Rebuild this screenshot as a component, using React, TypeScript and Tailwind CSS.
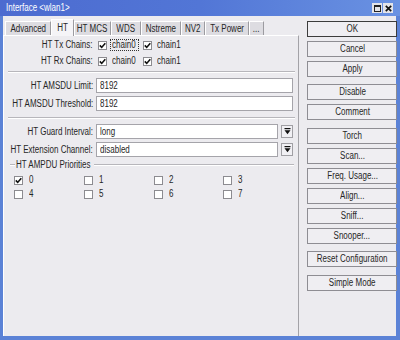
import React from "react";

const F = "font-['Liberation_Sans',Arial,sans-serif]";

function T({ children, o = "l" }: { children: React.ReactNode; o?: "l" | "r" | "c" }) {
  const origin = o === "l" ? "origin-left" : o === "r" ? "origin-right" : "origin-center";
  return <span className={`inline-block whitespace-nowrap leading-none scale-x-[0.8] shrink-0 ${origin}`}>{children}</span>;
}

function Check({ checked }: { checked?: boolean }) {
  return (
    <span className="w-[9px] h-[9px] border border-[#8c8b90] bg-white flex items-center justify-center shrink-0">
      {checked && (
        <svg width="7" height="7" viewBox="0 0 7 7">
          <path d="M0.8 3.4 L2.7 5.4 L6.3 1.2" stroke="#111" strokeWidth="1.6" fill="none" />
        </svg>
      )}
    </span>
  );
}

function Btn({ label, def, cls = "" }: { label: string; def?: boolean; cls?: string }) {
  return (
    <div
      className={`h-[16px] flex items-center justify-center bg-[#efeef2] border ${
        def ? "border-[#3c3c3c]" : "border-[#8e8d93]"
      } ${cls}`}
    >
      <T o="c">{label}</T>
    </div>
  );
}

function Label({ text }: { text: string }) {
  return (
    <div className="w-[85px] flex justify-end shrink-0">
      <T o="r">{text}</T>
    </div>
  );
}

function Sep({ cls = "" }: { cls?: string }) {
  return <div className={`h-[2px] border-t border-[#b7b6bb] border-b border-b-white -mr-[2px] ${cls}`} />;
}

function DropBtn() {
  return (
    <div className="w-[12px] h-[13px] ml-[3px] bg-[#f1f0f4] border border-[#a09fa4] flex items-center justify-center shrink-0">
      <svg width="7" height="7" viewBox="0 0 7 7">
        <rect x="0.5" y="0" width="6" height="1.2" fill="#111" />
        <path d="M0.5 2.2 L6.5 2.2 L3.5 6.2 Z" fill="#111" />
      </svg>
    </div>
  );
}

function ChainRow({ label, focus }: { label: string; focus?: boolean }) {
  return (
    <div className="h-[16px] flex items-center">
      <Label text={label} />
      <span className="ml-[5px]">
        <Check checked />
      </span>
      <span
        className={`ml-[3px] w-[29px] h-[12px] pl-[1px] border border-dotted flex items-center overflow-visible shrink-0 ${
          focus ? "border-[#333]" : "border-transparent"
        }`}
      >
        <T>chain0</T>
      </span>
      <span className="ml-[4px]">
        <Check checked />
      </span>
      <span className="ml-[5px] flex items-center">
        <T>chain1</T>
      </span>
    </div>
  );
}

const tabs: { t: string; w: string; active?: boolean }[] = [
  { t: "Advanced", w: "w-[46px]" },
  { t: "HT", w: "w-[23px]", active: true },
  { t: "HT MCS", w: "w-[37px]" },
  { t: "WDS", w: "w-[30px]" },
  { t: "Nstreme", w: "w-[40px]" },
  { t: "NV2", w: "w-[24px]" },
  { t: "Tx Power", w: "w-[44px]" },
  { t: "...", w: "w-[15px]" },
];

function Input({ v }: { v: string }) {
  return (
    <div className="ml-[3px] flex-1 min-w-0 h-full bg-white border border-[#a5a4aa] flex items-center pl-[3px]">
      <T>{v}</T>
    </div>
  );
}

export default function App() {
  return (
    <div className={`w-[400px] h-[340px] flex flex-col bg-[#5b82d6] text-[10px] text-[#262626] ${F}`}>
      {/* title bar */}
      <div className="h-[16px] flex items-center bg-gradient-to-r from-[#4c6bd0] via-[#5276d6] to-[#6a92e2] shrink-0">
        <div className="ml-[6px] text-white flex items-center">
          <T>{"Interface <wlan1>"}</T>
        </div>
        <div className="ml-auto mr-[7px] flex items-center gap-[1px]">
          <div className="w-[10px] h-[10px] bg-[#e4e4e8] flex items-center justify-center">
            <div className="w-[7px] h-[7px] border border-[#222] border-t-2" />
          </div>
          <div className="w-[10px] h-[10px] bg-[#e4e4e8] flex items-center justify-center">
            <svg width="7" height="7" viewBox="0 0 7 7">
              <path d="M0.8 0.8 L6.2 6.2 M6.2 0.8 L0.8 6.2" stroke="#111" strokeWidth="1.7" />
            </svg>
          </div>
        </div>
      </div>
      {/* body */}
      <div className="flex-1 flex ml-[3px] mr-[4px] mb-[4px] bg-[#ecebef]">
        {/* left panel */}
        <div className="w-[297px] flex flex-col">
          <div className="h-[19px] flex items-end pl-[2px]">
            {tabs.map((tb) => (
              <div
                key={tb.t}
                className={`${tb.w} flex items-center justify-center border-t border-l border-t-white border-l-white border-r border-r-[#9c9ba0] ${
                  tb.active ? "h-[17px] bg-[#f5f4f7] -mb-[1px] relative z-10" : "h-[14px] bg-[#dddce1]"
                }`}
              >
                <T o="c">{tb.t}</T>
              </div>
            ))}
          </div>
          <div className="flex-1 border-t border-l border-white border-r border-r-[#a3a2a7] pl-[4px] pr-[5px] flex flex-col">
            <div className="mt-[1px]">
              <ChainRow label="HT Tx Chains:" focus />
            </div>
            <ChainRow label="HT Rx Chains:" />
            <Sep cls="mt-[2px]" />
            <div className="mt-[5px] h-[15px] flex items-center">
              <Label text="HT AMSDU Limit:" />
              <Input v="8192" />
            </div>
            <div className="mt-[3px] h-[15px] flex items-center">
              <Label text="HT AMSDU Threshold:" />
              <Input v="8192" />
            </div>
            <Sep cls="mt-[6px]" />
            <div className="mt-[5px] h-[15px] flex items-center">
              <Label text="HT Guard Interval:" />
              <Input v="long" />
              <DropBtn />
            </div>
            <div className="mt-[3px] h-[15px] flex items-center">
              <Label text="HT Extension Channel:" />
              <Input v="disabled" />
              <DropBtn />
            </div>
            <div className="mt-[2px] h-[12px] flex items-center">
              <div className="ml-[2px] w-[5px] h-[2px] border-t border-[#b7b6bb] border-b border-b-white" />
              <div className="w-[79px] pl-[1px] flex items-center shrink-0">
                <T>HT AMPDU Priorities</T>
              </div>
              <div className="flex-1 h-[2px] border-t border-[#b7b6bb] border-b border-b-white -mr-[1px]" />
            </div>
            <div className="mt-[2px] pl-[6px] grid grid-cols-[70px_70px_69px_70px]">
              {["0", "1", "2", "3", "4", "5", "6", "7"].map((n) => (
                <div key={n} className="h-[14px] flex items-center">
                  <Check checked={n === "0"} />
                  <span className="ml-[6px] flex items-center">
                    <T>{n}</T>
                  </span>
                </div>
              ))}
            </div>
          </div>
        </div>
        {/* right column */}
        <div className="flex-1 flex flex-col pt-[5px] pl-[8px] pr-[3px] gap-[4px]">
          <Btn label="OK" def />
          <Btn label="Cancel" />
          <Btn label="Apply" />
          <Btn label="Disable" cls="mt-[3px]" />
          <Btn label="Comment" />
          <Btn label="Torch" cls="mt-[4px]" />
          <Btn label="Scan..." />
          <Btn label="Freq. Usage..." />
          <Btn label="Align..." />
          <Btn label="Sniff..." />
          <Btn label="Snooper..." />
          <Btn label="Reset Configuration" cls="mt-[3px]" />
          <Btn label="Simple Mode" cls="mt-[4px]" />
        </div>
      </div>
    </div>
  );
}
